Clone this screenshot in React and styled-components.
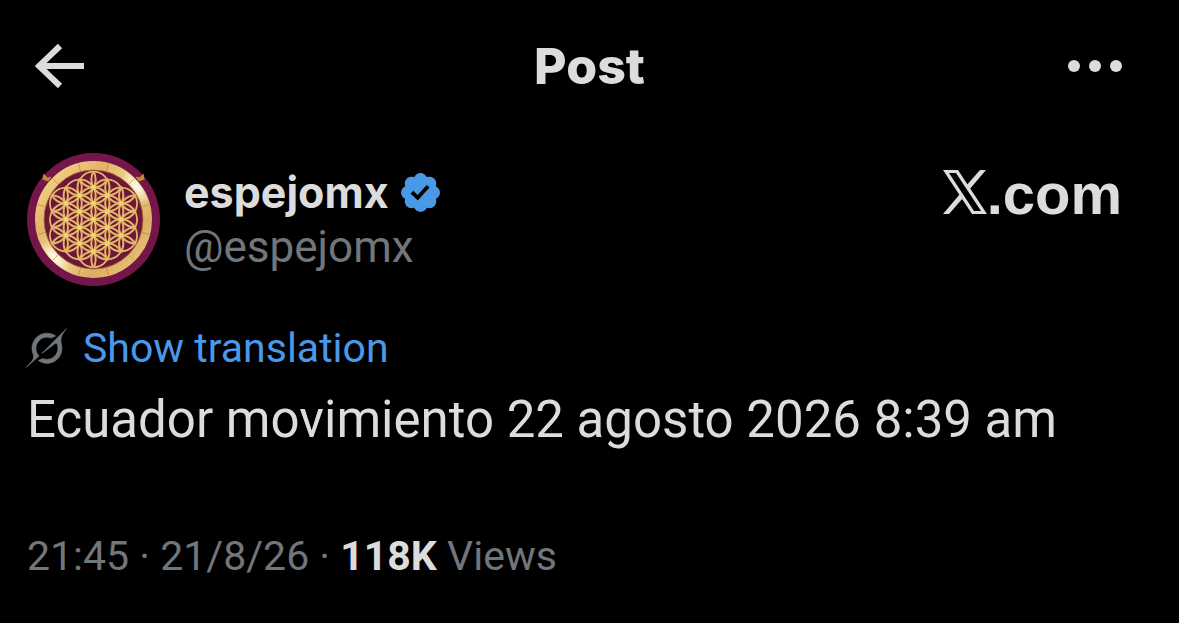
import React from 'react'
import styled, { createGlobalStyle } from 'styled-components'

const GlobalStyle = createGlobalStyle`
    * {
        box-sizing: border-box;
    }
    body {
        margin: 0;
        background-color: #000;
        color: #dcdcdc;
        font-family: Roboto, "Liberation Sans", sans-serif;
    }
`

const Main = styled.main`
    padding: 32px 27px 36px;
`

const Header = styled.header`
    display: grid;
    grid-template-columns: 1fr auto 1fr;
    align-items: center;
    height: 68px;
`

const Title = styled.h1`
    margin: 0;
    font-family: Inter, sans-serif;
    font-size: 50px;
    line-height: 64px;
    font-weight: 800;
`

const IconButton = styled.button`
    display: flex;
    justify-self: ${(props) => props.$side};
    padding: ${(props) => props.$side === 'end' ? '8px 30px 8px 8px' : '8px'};
    border: none;
    background: none;
    color: inherit;
    cursor: pointer;
`

const Author = styled.section`
    display: flex;
    align-items: flex-start;
    gap: 24px;
    margin-top: 53px;
`

const AvatarLink = styled.a`
    display: flex;
`

const Names = styled.div`
    flex: 1;
    padding-top: 12px;
`

const Name = styled.a`
    display: flex;
    align-items: center;
    gap: 12px;
    color: inherit;
    text-decoration: none;
    font-family: Inter, sans-serif;
    font-size: 43px;
    line-height: 54px;
    font-weight: 700;
`

const Handle = styled.div`
    color: #71767b;
    font-size: 44px;
    line-height: 56px;
`

const Brand = styled.a`
    display: flex;
    align-items: baseline;
    padding: 8px 30px 0 0;
    color: inherit;
    text-decoration: none;
    font-family: "Liberation Sans", sans-serif;
    font-size: 58px;
    line-height: 66px;
    font-weight: 700;
`

const Translate = styled.button`
    display: flex;
    align-items: center;
    gap: 16px;
    margin-top: 36px;
    padding: 0;
    border: none;
    background: none;
    color: #4a99e9;
    font: inherit;
    font-size: 41px;
    line-height: 52px;
    cursor: pointer;
`

const Text = styled.p`
    margin: 10px 0 0;
    font-size: 51px;
    line-height: 72px;
`

const Info = styled.div`
    margin-top: 72px;
    color: #71767b;
    font-size: 41px;
    line-height: 56px;
    strong {
        color: #dcdcdc;
    }
`

const STEP = 16

// centres of the hexagonal grid, up to `rings` steps from the middle
const grid = (rings) => {
    const points = []
    for (let q = -rings; q <= rings; q++) {
        for (let r = -rings; r <= rings; r++) {
            if (Math.abs(q + r) <= rings) {
                points.push([q * STEP * 0.866, (r + q / 2) * STEP])
            }
        }
    }
    return points
}

const Avatar = () => (
    <svg width="133" height="133" viewBox="-66.5 -66.5 133 133" aria-label="espejomx">
        <defs>
            <linearGradient id="gold" x1="0" y1="0" x2="1" y2="1">
                <stop offset="0" stopColor="#d9a253" />
                <stop offset="0.12" stopColor="#f0cc80" />
                <stop offset="0.3" stopColor="#e2b468" />
                <stop offset="0.5" stopColor="#f3d893" />
                <stop offset="0.75" stopColor="#dcae62" />
                <stop offset="1" stopColor="#eecb82" />
            </linearGradient>
            <radialGradient id="shine">
                <stop offset="0" stopColor="#fffdf0" />
                <stop offset="1" stopColor="#fffdf0" stopOpacity="0" />
            </radialGradient>
            <clipPath id="ring">
                <path clipRule="evenodd" d="M-58 0a58 58 0 1 0 116 0a58 58 0 1 0-116 0M-50 0a50 50 0 1 0 100 0a50 50 0 1 0-100 0" />
            </clipPath>
            <clipPath id="flower">
                {grid(2).map(([x, y]) => <circle key={`${x} ${y}`} cx={x} cy={y} r={STEP + 0.8} />)}
            </clipPath>
        </defs>
        <circle r="66.5" fill="#74164a" />
        <circle r="54" fill="#6c1638" stroke="url(#gold)" strokeWidth="9" />
        <g clipPath="url(#ring)">
            <ellipse cx="43" cy="-33" rx="9" ry="20" fill="url(#shine)" transform="rotate(-35 43 -33)" />
            <ellipse cx="-39" cy="38" rx="9" ry="20" fill="url(#shine)" transform="rotate(-45 -39 38)" />
            {[15, 45, 75, 105, 135, 165, 195, 225, 255, 285, 315, 345].map((angle) => (
                <path key={angle} d="M50 0H58" stroke="#b5803a" strokeWidth="0.6" transform={`rotate(${angle})`} />
            ))}
        </g>
        <path d="M-50-46l4 4 4-1-3 5-6-2zM50-46l-4 4-4-1 3 5 6-2z" fill="#c08a35" />
        <circle r="49.5" fill="none" stroke="#a86c36" strokeWidth="0.8" />
        <g clipPath="url(#flower)" fill="none" stroke="#e3b568" strokeWidth="2">
            {grid(3).map(([x, y]) => <circle key={`${x} ${y}`} cx={x} cy={y} r={STEP} />)}
        </g>
        {grid(2).map(([x, y]) => <circle key={`${x} ${y}`} cx={x} cy={y} r="2.4" fill="#f3ce82" />)}
    </svg>
)

const Verified = () => (
    <svg width="39" height="39" viewBox="1.75 1.75 20.5 20.5" fill="#4a99e9" aria-label="Verified">
        <path d="M22.25 12c0-1.43-.88-2.67-2.19-3.34.46-1.39.2-2.9-.81-3.91s-2.52-1.27-3.91-.81c-.66-1.31-1.91-2.19-3.34-2.19s-2.67.88-3.33 2.19c-1.4-.46-2.91-.2-3.92.81s-1.26 2.52-.8 3.91c-1.31.67-2.2 1.91-2.2 3.34s.89 2.67 2.2 3.34c-.46 1.39-.21 2.9.8 3.91s2.52 1.26 3.91.81c.67 1.31 1.91 2.19 3.34 2.19s2.68-.88 3.34-2.19c1.39.45 2.9.2 3.91-.81s1.27-2.52.81-3.91c1.31-.67 2.19-1.91 2.19-3.34zm-11.71 4.2L6.8 12.46l1.41-1.42 2.26 2.26 4.8-5.23 1.47 1.36-6.2 6.77z" />
    </svg>
)

const Grok = () => (
    <svg width="40" height="40" viewBox="0.5 0 33 32" fill="#71767b" stroke="#71767b" strokeWidth="0.5" overflow="visible" aria-hidden="true">
        <path d="M12.745 20.54l10.97-8.19c.539-.4 1.307-.244 1.564.38 1.349 3.288.746 7.241-1.938 9.955-2.683 2.714-6.417 3.31-9.83 1.954l-3.728 1.745c5.347 3.697 11.84 2.782 15.898-1.324 3.219-3.255 4.216-7.692 3.284-11.693l.008.009c-1.351-5.878.332-8.227 3.782-13.031L33 0l-4.54 4.59v-.014L12.743 20.544m-2.263 1.987c-3.837-3.707-3.175-9.446.1-12.755 2.42-2.449 6.388-3.448 9.852-1.979l3.72-1.737c-.67-.49-1.53-1.017-2.515-1.387-4.455-1.854-9.789-.931-13.41 2.728-3.483 3.523-4.579 8.94-2.697 13.561 1.405 3.454-.899 5.898-3.22 8.364C1.49 30.2.666 31.074 0 32l10.478-9.466" />
    </svg>
)

const XLogo = () => (
    <svg width="44" height="44" viewBox="0 0 44 44" fill="currentColor" aria-label="X">
        <path fillRule="evenodd" d="M0 0H15L44 44H29zM6 3L31 41H38L13 3z" />
        <path d="M37 0H43L26 20L23 16zM17 24L20 28L6 44H0z" />
    </svg>
)

function App () {
    return (
        <>
            <GlobalStyle />
            <Main>
                <Header>
                    <IconButton $side="start" aria-label="Back">
                        <svg width="50" height="46" viewBox="0 0 50 46" fill="none" stroke="currentColor" strokeWidth="6">
                            <path d="M25 3L4 23L25 43M4 23H49" />
                        </svg>
                    </IconButton>
                    <Title>Post</Title>
                    <IconButton $side="end" aria-label="More">
                        <svg width="54" height="14" viewBox="0 0 54 14" fill="currentColor">
                            <circle cx="6" cy="7" r="6" />
                            <circle cx="27" cy="7" r="6" />
                            <circle cx="48" cy="7" r="6" />
                        </svg>
                    </IconButton>
                </Header>
                <Author>
                    <AvatarLink href="#espejomx"><Avatar /></AvatarLink>
                    <Names>
                        <Name href="#espejomx">espejomx <Verified /></Name>
                        <Handle>@espejomx</Handle>
                    </Names>
                    <Brand href="#home"><XLogo />.com</Brand>
                </Author>
                <Translate><Grok />Show translation</Translate>
                <Text>Ecuador movimiento 22 agosto 2026 8:39 am</Text>
                <Info>21:45 · 21/8/26 · <strong>118K</strong> Views</Info>
            </Main>
        </>
    )
}

export default App
